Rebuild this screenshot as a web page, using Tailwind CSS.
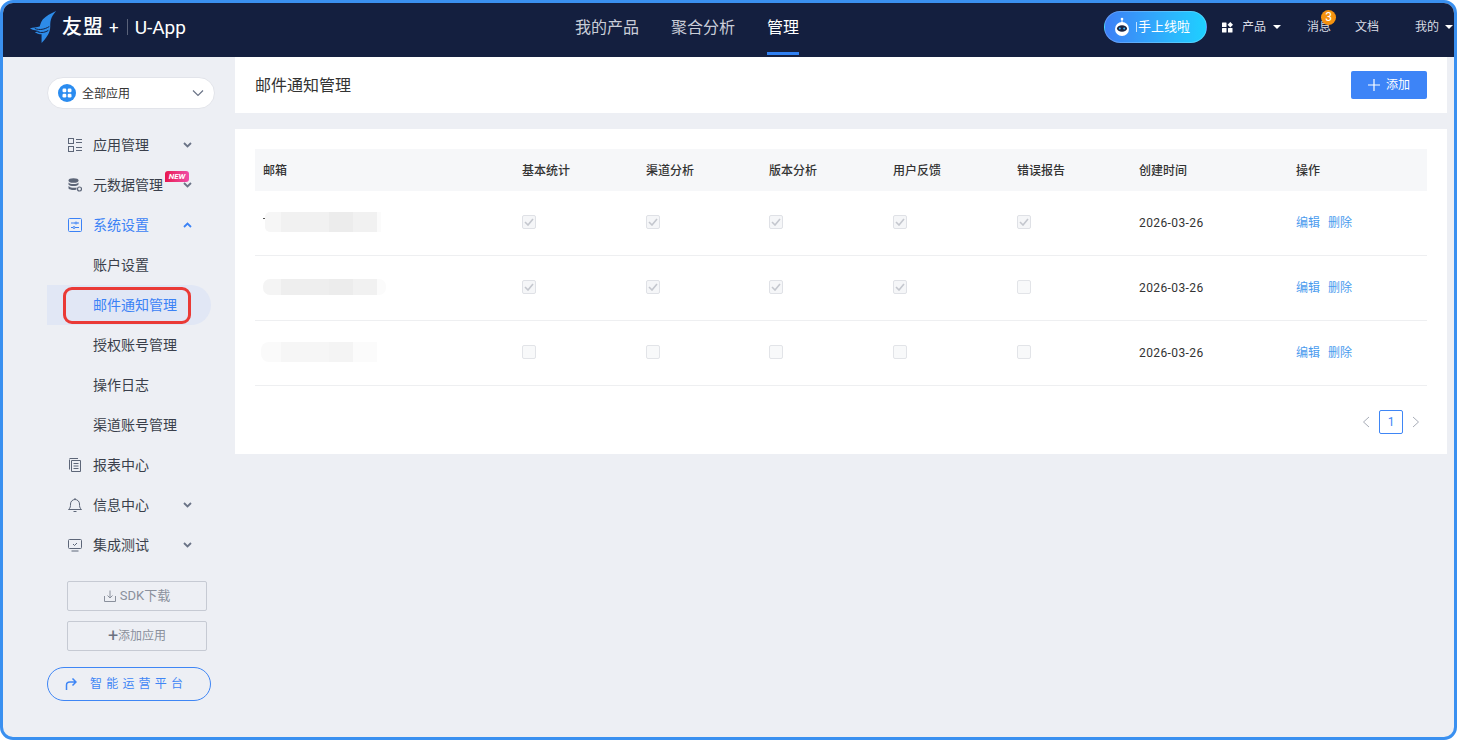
<!DOCTYPE html>
<html lang="zh-CN">
<head>
  <meta charset="UTF-8" />
  <meta name="viewport" content="width=device-width, initial-scale=1.0"/>
  <title>邮件通知管理 - U-App</title>
  <script src="https://cdn.jsdelivr.net/npm/@tailwindcss/browser@4"></script>
</head>
<body class="bg-white font-['Roboto','Noto_Sans_CJK_SC',sans-serif]">
<div class="w-[1457px] h-[740px] border-[3px] border-[#3a90f0] rounded-[13px] overflow-hidden bg-[#edeff4] flex flex-col">

  <!-- Header -->
  <header class="h-[54px] shrink-0 bg-[#141f3f] flex items-center pb-[6px] text-white">
    <div class="w-[572px] shrink-0 flex items-center pl-[26px]">
      <svg class="w-[29px] h-[33px]" viewBox="0 0 30 34">
        <path d="M28 0 C22 3 18 5 15 8 C12 11 12 14 11 16 C8 17 4 17 1 18 C5 20 8 20 11 21 C9 21 7 22 6 22 C9 24 11 24 13 24 C13 27 13 30 13 33 C17 29 22 23 22 16 C22 11 22 7 28 0 Z" fill="#2d8be8"/>
        <path d="M6 18 C11 20 16 19 21 16 M9 21.500 C13 23 17 22 20 20" stroke="#141f3f" stroke-width="1" fill="none"/>
      </svg>
      <span class="ml-[4px] text-[20px] leading-none font-medium tracking-[1px]">友盟</span>
      <span class="ml-[5px] text-[17px] leading-none">+</span>
      <span class="ml-[8px] w-px h-[16px] bg-white/30"></span>
      <span class="ml-[7px] text-[19px] leading-none">U-App</span>
    </div>
    <nav class="flex gap-[32px] h-[54px] -mb-[6px] text-[16px] text-[#c9cdd8]">
      <a class="flex items-center pb-[4px]">我的产品</a>
      <a class="flex items-center pb-[4px]">聚合分析</a>
      <a class="flex items-center text-white border-b-[3px] border-[#2f80f2] pt-[1px] mb-[2px]">管理</a>
    </nav>
    <div class="ml-[305px] w-[103px] h-[32px] rounded-full bg-gradient-to-r from-[#3c7ff6] to-[#1dd0ff] border border-white/20 flex items-center pl-[9px] text-[13px]">
      <svg class="w-[16px] h-[20px] -mt-[1px]" viewBox="0 0 16 20">
        <circle cx="8" cy="2" r="1.300" fill="#fff"/>
        <path d="M8 3V6" stroke="#fff"/>
        <circle cx="8" cy="12" r="7" fill="#fff"/>
        <ellipse cx="8" cy="11.500" rx="5" ry="3.200" fill="#1c2440"/>
        <circle cx="5.800" cy="11.500" r="1" fill="#35b8ff"/>
        <circle cx="10.200" cy="11.500" r="1" fill="#35b8ff"/>
      </svg>
      <span class="ml-[6px] w-px h-[10px] bg-white/70"></span>
      <span class="ml-[1px]">手上线啦</span>
    </div>
    <div class="ml-[15px] flex items-center text-[12px] text-[#d9dce4]">
      <svg class="w-[12px] h-[11px] text-white" viewBox="0 0 12 11" fill="currentColor">
        <rect x="0" y="0.500" width="4.500" height="4.500" rx="0.500"/>
        <rect x="0" y="6" width="4.500" height="4.500" rx="0.500"/>
        <rect x="6" y="6" width="4.500" height="4.500" rx="0.500"/>
        <path d="M8.300 0 L11 2.700 L8.300 5.400 L5.600 2.700 Z"/>
      </svg>
      <span class="ml-[8px]">产品</span>
      <span class="ml-[7px] w-0 h-0 border-x-[4px] border-x-transparent border-t-[4px] border-t-white"></span>
    </div>
    <div class="relative ml-[26px] text-[12px] text-[#d9dce4]">
      消息
      <span class="absolute -top-[8px] left-[14px] w-[15px] h-[15px] rounded-full bg-[#f5920f] text-white text-[12px] leading-[15px] text-center">3</span>
    </div>
    <span class="ml-[24px] text-[12px] text-[#d9dce4]">文档</span>
    <div class="ml-[36px] flex items-center text-[12px] text-[#d9dce4]">
      <span>我的</span>
      <span class="ml-[6px] w-0 h-0 border-x-[4px] border-x-transparent border-t-[4px] border-t-white"></span>
    </div>
  </header>

  <div class="flex flex-1 min-h-0">
    <!-- Sidebar -->
    <aside class="w-[232px] shrink-0 pl-[44px] pt-[20px]">
      <div class="w-[168px] h-[32px] bg-white border border-[#e2e4ea] rounded-full flex items-center pl-[10px] pr-[10px] text-[12px] text-[#333]">
        <svg class="w-[18px] h-[18px] shrink-0" viewBox="0 0 18 18">
          <circle cx="9" cy="9" r="9" fill="#2a8cf0"/>
          <rect x="4.500" y="4.500" width="3.800" height="3.800" rx="1.200" fill="#fff"/>
          <rect x="9.700" y="4.500" width="3.800" height="3.800" rx="1.200" fill="#fff"/>
          <rect x="4.500" y="9.700" width="3.800" height="3.800" rx="1.200" fill="#fff"/>
          <rect x="9.700" y="9.700" width="3.800" height="3.800" rx="1.200" fill="#fff"/>
        </svg>
        <span class="ml-[6px] pt-[1px]">全部应用</span>
        <svg class="ml-auto w-[12px] h-[8px] text-[#6b7487]" viewBox="0 0 12 8" fill="none" stroke="currentColor" stroke-width="1.200"><path d="M1 1.500 L6 6.500 L11 1.500"/></svg>
      </div>

      <nav class="mt-[16px] w-[164px] text-[14px] text-[#3a3f4b]">
        <div class="h-[40px] flex items-center pl-[21px]">
          <svg class="w-[14px] h-[14px] mr-[11px] text-[#5d6678]" viewBox="0 0 14 14" fill="none" stroke="currentColor"><rect x="0.500" y="0.500" width="5" height="5"/><rect x="0.500" y="8.500" width="5" height="5"/><path d="M8 1.500H14M8 4.500H14M8 9.500H14M8 12.500H14"/></svg>
          <span>应用管理</span>
          <svg class="ml-auto mr-[19px] w-[9px] h-[6px] text-[#6b7487]" viewBox="0 0 9 6" fill="none" stroke="currentColor" stroke-width="1.800"><path d="M1 1 L4.500 4.500 L8 1"/></svg>
        </div>
        <div class="relative h-[40px] flex items-center pl-[21px]">
          <svg class="w-[14px] h-[14px] mr-[11px] text-[#5d6678]" viewBox="0 0 14 14" fill="currentColor"><ellipse cx="5.500" cy="2.500" rx="5" ry="2.300"/><path d="M0.500 4.500C2 6.500 9 6.500 10.500 4.500V6.500C9 8.500 2 8.500 0.500 6.500ZM0.500 8C2 10 7 10 8.500 9.500V11.500C6 12.500 2 12 0.500 10.500Z"/><circle cx="11.500" cy="11" r="2" fill="none" stroke="currentColor" stroke-width="1.200"/></svg>
          <span>元数据管理</span>
          <span class="absolute left-[118px] top-[6px] w-[24px] h-[11px] rounded-[3px] rounded-bl-none bg-gradient-to-r from-[#e8134f] to-[#f04aa8] text-white text-[8px] leading-[11px] font-bold italic text-center">NEW</span>
          <svg class="ml-auto mr-[19px] w-[9px] h-[6px] text-[#6b7487]" viewBox="0 0 9 6" fill="none" stroke="currentColor" stroke-width="1.800"><path d="M1 1 L4.500 4.500 L8 1"/></svg>
        </div>
        <div class="h-[40px] flex items-center pl-[21px] text-[#3b82f6]">
          <svg class="w-[14px] h-[14px] mr-[11px]" viewBox="0 0 14 14" fill="none" stroke="currentColor"><rect x="0.500" y="0.500" width="13" height="13" rx="1"/><path d="M3 5H7M9 5H11M3 9.500H5M7 9.500H11"/><circle cx="8" cy="5" r="1"/><circle cx="6" cy="9.500" r="1"/></svg>
          <span>系统设置</span>
          <svg class="ml-auto mr-[19px] w-[9px] h-[6px]" viewBox="0 0 9 6" fill="none" stroke="currentColor" stroke-width="1.800"><path d="M1 5 L4.500 1.500 L8 5"/></svg>
        </div>
        <div class="h-[40px] flex items-center pl-[46px]">账户设置</div>
        <div class="relative h-[40px] flex items-center pl-[46px] bg-[#e1e7f5] rounded-r-full text-[#3b82f6]">
          邮件通知管理
          <span class="absolute left-[16px] top-[2px] w-[128px] h-[37px] border-[3px] border-[#ea3a36] rounded-[9px]"></span>
        </div>
        <div class="h-[40px] flex items-center pl-[46px]">授权账号管理</div>
        <div class="h-[40px] flex items-center pl-[46px]">操作日志</div>
        <div class="h-[40px] flex items-center pl-[46px]">渠道账号管理</div>
        <div class="h-[40px] flex items-center pl-[21px]">
          <svg class="w-[14px] h-[14px] mr-[11px] text-[#5d6678]" viewBox="0 0 14 14" fill="none" stroke="currentColor"><path d="M3.500 2.500V13.500H12.500V2.500Z"/><path d="M1.500 1.500V11.500M1.500 0.500H10M5.500 5.500H10.500M5.500 8H10.500M5.500 10.500H10.500"/></svg>
          <span>报表中心</span>
        </div>
        <div class="h-[40px] flex items-center pl-[21px]">
          <svg class="w-[14px] h-[14px] mr-[11px] text-[#5d6678]" viewBox="0 0 14 14" fill="none" stroke="currentColor"><path d="M0.500 11.500H13.500C11.500 10 11.500 8 11.500 6C11.500 3.500 9.500 1.500 7 1.500C4.500 1.500 2.500 3.500 2.500 6C2.500 8 2.500 10 0.500 11.500ZM5.500 13.500H8.500M7 0V1.500"/></svg>
          <span>信息中心</span>
          <svg class="ml-auto mr-[19px] w-[9px] h-[6px] text-[#6b7487]" viewBox="0 0 9 6" fill="none" stroke="currentColor" stroke-width="1.800"><path d="M1 1 L4.500 4.500 L8 1"/></svg>
        </div>
        <div class="h-[40px] flex items-center pl-[21px]">
          <svg class="w-[14px] h-[14px] mr-[11px] text-[#5d6678]" viewBox="0 0 14 14" fill="none" stroke="currentColor"><rect x="0.500" y="1.500" width="13" height="9" rx="1"/><path d="M3.500 13H10.500M5 6L6.500 7.500L9 5"/></svg>
          <span>集成测试</span>
          <svg class="ml-auto mr-[19px] w-[9px] h-[6px] text-[#6b7487]" viewBox="0 0 9 6" fill="none" stroke="currentColor" stroke-width="1.800"><path d="M1 1 L4.500 4.500 L8 1"/></svg>
        </div>
      </nav>

      <div class="mt-[16px] ml-[20px] w-[140px] h-[30px] border border-[#c6cad3] rounded-[2px] flex items-center justify-center text-[13px] text-[#8a909c]">
        <svg class="w-[12px] h-[12px] mr-[4px]" viewBox="0 0 12 12" fill="none" stroke="currentColor"><path d="M6 0.500V8M3.500 5.500L6 8L8.500 5.500M0.500 6V11.500H11.500V6"/></svg>
        SDK下载
      </div>
      <div class="mt-[10px] ml-[20px] w-[140px] h-[30px] border border-[#c6cad3] rounded-[2px] flex items-center justify-center text-[12px] text-[#8a909c]">
        <span class="text-[#6b7280] text-[18px] leading-none">+</span>添加应用
      </div>
      <div class="mt-[16px] w-[164px] h-[34px] border border-[#3f86f5] rounded-full flex items-center pl-[17px] text-[12px] text-[#3f86f5]">
        <svg class="w-[12px] h-[12px] mr-[13px]" viewBox="0 0 12 12" fill="none" stroke="currentColor" stroke-width="1.500"><path d="M1.500 12V7C1.500 5 3 4 5 4H11M7.500 0.500L11 4L7.500 7.500"/></svg>
        <span class="tracking-[4.200px]">智能运营平台</span>
      </div>
    </aside>

    <!-- Main -->
    <main class="w-[1212px] shrink-0">
      <div class="h-[56px] bg-white flex items-center justify-between pl-[20px] pr-[20px]">
        <h1 class="text-[16px] text-[#333] pt-[1px]">邮件通知管理</h1>
        <button class="w-[76px] h-[28px] bg-[#3d84f7] rounded-[2px] flex items-center justify-center text-[12px] text-white">
          <svg class="w-[12px] h-[12px] mr-[6px]" viewBox="0 0 12 12" stroke="currentColor" stroke-width="1.200"><path d="M6 0V12M0 6H12"/></svg>
          添加
        </button>
      </div>

      <section class="mt-[16px] h-[325px] bg-white px-[20px] pt-[20px]">
        <table class="w-[1172px] table-fixed text-[12px] text-[#333] text-left">
          <thead class="bg-[#f6f7f9]">
            <tr class="h-[42px]">
              <th class="w-[259px] pl-[8px] pt-[1px] font-medium">邮箱</th>
              <th class="w-[124px] pl-[8px] pt-[1px] font-medium">基本统计</th>
              <th class="w-[123px] pl-[8px] pt-[1px] font-medium">渠道分析</th>
              <th class="w-[124px] pl-[8px] pt-[1px] font-medium">版本分析</th>
              <th class="w-[124px] pl-[8px] pt-[1px] font-medium">用户反馈</th>
              <th class="w-[122px] pl-[8px] pt-[1px] font-medium">错误报告</th>
              <th class="w-[157px] pl-[8px] pt-[1px] font-medium">创建时间</th>
              <th class="w-[139px] pl-[8px] pt-[1px] font-medium">操作</th>
            </tr>
          </thead>
          <tbody class="[&_td>span]:relative [&_td>span]:-top-px [&_td>div]:relative [&_td>div]:-top-px">
            <tr class="h-[64px] border-b border-[#eeeff1]">
              <td>
                <div class="flex ml-[10px] w-[116px] h-[20px] rounded-l-[5px]">
                  <span class="absolute -left-[2px] top-[6px] w-[2px] h-[1px] bg-[#555]"></span>
                  <span class="w-[16px] bg-[#f6f6f6] rounded-l-[5px]"></span><span class="w-[48px] bg-[#f1f1f1]"></span><span class="w-[24px] bg-[#ececec]"></span><span class="w-[24px] bg-[#f1f1f1]"></span><span class="w-[4px] bg-[#fbfbfb]"></span>
                </div>
              </td>
              <td class="pl-[8px]"><span class="w-[14px] h-[14px] border border-[#dfe1e6] rounded-[2px] bg-[#f5f6f8] flex items-center justify-center"><svg class="w-[10px] h-[8px] text-[#c4c7ce]" viewBox="0 0 10 8" fill="none" stroke="currentColor" stroke-width="1.600"><path d="M1 4L4 7L9 1"/></svg></span></td>
              <td class="pl-[8px]"><span class="w-[14px] h-[14px] border border-[#dfe1e6] rounded-[2px] bg-[#f5f6f8] flex items-center justify-center"><svg class="w-[10px] h-[8px] text-[#c4c7ce]" viewBox="0 0 10 8" fill="none" stroke="currentColor" stroke-width="1.600"><path d="M1 4L4 7L9 1"/></svg></span></td>
              <td class="pl-[8px]"><span class="w-[14px] h-[14px] border border-[#dfe1e6] rounded-[2px] bg-[#f5f6f8] flex items-center justify-center"><svg class="w-[10px] h-[8px] text-[#c4c7ce]" viewBox="0 0 10 8" fill="none" stroke="currentColor" stroke-width="1.600"><path d="M1 4L4 7L9 1"/></svg></span></td>
              <td class="pl-[8px]"><span class="w-[14px] h-[14px] border border-[#dfe1e6] rounded-[2px] bg-[#f5f6f8] flex items-center justify-center"><svg class="w-[10px] h-[8px] text-[#c4c7ce]" viewBox="0 0 10 8" fill="none" stroke="currentColor" stroke-width="1.600"><path d="M1 4L4 7L9 1"/></svg></span></td>
              <td class="pl-[8px]"><span class="w-[14px] h-[14px] border border-[#dfe1e6] rounded-[2px] bg-[#f5f6f8] flex items-center justify-center"><svg class="w-[10px] h-[8px] text-[#c4c7ce]" viewBox="0 0 10 8" fill="none" stroke="currentColor" stroke-width="1.600"><path d="M1 4L4 7L9 1"/></svg></span></td>
              <td class="pl-[8px] tracking-[0.4px]">2026-03-26</td>
              <td class="pl-[8px] text-[#4a9bee]"><a>编辑</a><a class="ml-[8px]">删除</a></td>
            </tr>
            <tr class="h-[65px] border-b border-[#eeeff1]">
              <td>
                <div class="flex ml-[8px] w-[123px] h-[16px] rounded-[7px] overflow-hidden">
                  <span class="w-[18px] bg-[#f4f4f4]"></span><span class="w-[48px] bg-[#eeeeee]"></span><span class="w-[24px] bg-[#ececec]"></span><span class="w-[24px] bg-[#f1f1f1]"></span><span class="w-[9px] bg-[#fbfbfb]"></span>
                </div>
              </td>
              <td class="pl-[8px]"><span class="w-[14px] h-[14px] border border-[#dfe1e6] rounded-[2px] bg-[#f5f6f8] flex items-center justify-center"><svg class="w-[10px] h-[8px] text-[#c4c7ce]" viewBox="0 0 10 8" fill="none" stroke="currentColor" stroke-width="1.600"><path d="M1 4L4 7L9 1"/></svg></span></td>
              <td class="pl-[8px]"><span class="w-[14px] h-[14px] border border-[#dfe1e6] rounded-[2px] bg-[#f5f6f8] flex items-center justify-center"><svg class="w-[10px] h-[8px] text-[#c4c7ce]" viewBox="0 0 10 8" fill="none" stroke="currentColor" stroke-width="1.600"><path d="M1 4L4 7L9 1"/></svg></span></td>
              <td class="pl-[8px]"><span class="w-[14px] h-[14px] border border-[#dfe1e6] rounded-[2px] bg-[#f5f6f8] flex items-center justify-center"><svg class="w-[10px] h-[8px] text-[#c4c7ce]" viewBox="0 0 10 8" fill="none" stroke="currentColor" stroke-width="1.600"><path d="M1 4L4 7L9 1"/></svg></span></td>
              <td class="pl-[8px]"><span class="w-[14px] h-[14px] border border-[#dfe1e6] rounded-[2px] bg-[#f5f6f8] flex items-center justify-center"><svg class="w-[10px] h-[8px] text-[#c4c7ce]" viewBox="0 0 10 8" fill="none" stroke="currentColor" stroke-width="1.600"><path d="M1 4L4 7L9 1"/></svg></span></td>
              <td class="pl-[8px]"><span class="block w-[14px] h-[14px] border border-[#e2e4e8] rounded-[2px] bg-[#f8f9fa]"></span></td>
              <td class="pl-[8px] tracking-[0.4px]">2026-03-26</td>
              <td class="pl-[8px] text-[#4a9bee]"><a>编辑</a><a class="ml-[8px]">删除</a></td>
            </tr>
            <tr class="h-[65px] border-b border-[#eeeff1]">
              <td>
                <div class="flex ml-[6px] w-[116px] h-[20px] rounded-l-[8px] overflow-hidden">
                  <span class="w-[20px] bg-[#fafafa]"></span><span class="w-[48px] bg-[#f6f6f6]"></span><span class="w-[24px] bg-[#f4f4f4]"></span><span class="w-[24px] bg-[#fbfbfb]"></span>
                </div>
              </td>
              <td class="pl-[8px]"><span class="block w-[14px] h-[14px] border border-[#e2e4e8] rounded-[2px] bg-[#f8f9fa]"></span></td>
              <td class="pl-[8px]"><span class="block w-[14px] h-[14px] border border-[#e2e4e8] rounded-[2px] bg-[#f8f9fa]"></span></td>
              <td class="pl-[8px]"><span class="block w-[14px] h-[14px] border border-[#e2e4e8] rounded-[2px] bg-[#f8f9fa]"></span></td>
              <td class="pl-[8px]"><span class="block w-[14px] h-[14px] border border-[#e2e4e8] rounded-[2px] bg-[#f8f9fa]"></span></td>
              <td class="pl-[8px]"><span class="block w-[14px] h-[14px] border border-[#e2e4e8] rounded-[2px] bg-[#f8f9fa]"></span></td>
              <td class="pl-[8px] tracking-[0.4px]">2026-03-26</td>
              <td class="pl-[8px] text-[#4a9bee]"><a>编辑</a><a class="ml-[8px]">删除</a></td>
            </tr>
          </tbody>
        </table>

        <div class="mt-[24px] flex items-center justify-end pr-[7px]">
          <svg class="w-[8px] h-[12px] text-[#a8adb8]" viewBox="0 0 8 12" fill="none" stroke="currentColor"><path d="M7 1L1.500 6L7 11"/></svg>
          <span class="ml-[9px] w-[24px] h-[24px] border border-[#3f86f5] rounded-[2px] text-[12px] leading-[22px] text-center text-[#3f86f5]">1</span>
          <svg class="ml-[9px] w-[8px] h-[12px] text-[#a8adb8]" viewBox="0 0 8 12" fill="none" stroke="currentColor"><path d="M1 1L6.500 6L1 11"/></svg>
        </div>
      </section>
    </main>
  </div>
</div>
</body>
</html>
